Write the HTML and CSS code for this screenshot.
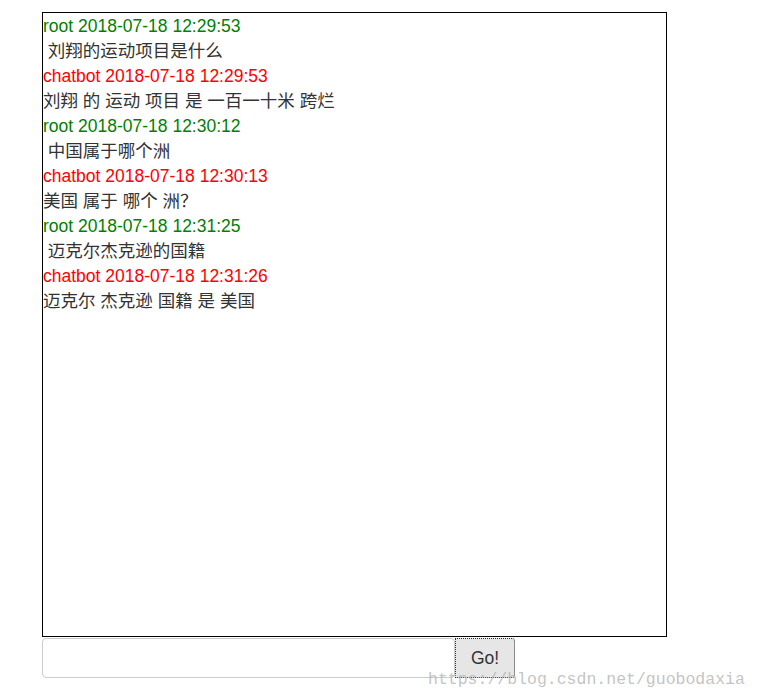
FILE: index.html
```html
<!DOCTYPE html>
<html>
<head>
<meta charset="utf-8">
<link rel="stylesheet" href="styles.css">
</head>
<body>
<div class="page">
  <div class="chat">
    <div class="meta user">root 2018-07-18 12:29:53</div>
    <div class="msg">&nbsp;刘翔的运动项目是什么</div>
    <div class="meta bot">chatbot 2018-07-18 12:29:53</div>
    <div class="msg">刘翔 的 运动 项目 是 一百一十米 跨烂</div>
    <div class="meta user">root 2018-07-18 12:30:12</div>
    <div class="msg">&nbsp;中国属于哪个洲</div>
    <div class="meta bot">chatbot 2018-07-18 12:30:13</div>
    <div class="msg">美国 属于 哪个 洲？</div>
    <div class="meta user">root 2018-07-18 12:31:25</div>
    <div class="msg">&nbsp;迈克尔杰克逊的国籍</div>
    <div class="meta bot">chatbot 2018-07-18 12:31:26</div>
    <div class="msg">迈克尔 杰克逊 国籍 是 美国</div>
  </div>
  <div class="form">
    <input class="input" type="text">
    <button class="go">Go!</button>
  </div>
</div>
<div class="watermark">https://blog.csdn.net/guobodaxia</div>
</body>
</html>
```
FILE: styles.css
```css
html, body {
  margin: 0;
  padding: 0;
  background: #fff;
}
body {
  font-family: "Liberation Sans", Arial, "Noto Sans CJK SC", sans-serif;
  font-size: 17.5px;
}
.page {
  padding: 12px 0 0 42px;
}
.chat {
  box-sizing: border-box;
  width: 625px;
  height: 625px;
  border: 1px solid #000;
  padding-top: 1px;
  overflow: hidden;
}
.meta, .msg {
  height: 25px;
  line-height: 25px;
  white-space: pre;
}
.user { color: #008000; }
.bot { color: #ff0000; }
.msg { color: #333; }
.form {
  display: flex;
  margin-top: 1px;
}
.input {
  box-sizing: border-box;
  width: 413px;
  height: 40px;
  border: 1px solid #ccc;
  border-radius: 4px;
  margin: 0;
  padding: 0 6px;
  background: #fff;
}
.go {
  box-sizing: border-box;
  width: 60px;
  height: 40px;
  margin: 0;
  border: 1px dotted #333;
  background: #e6e6e6;
  color: #333;
  font-family: "Liberation Sans", Arial, sans-serif;
  font-size: 17.5px;
  border-radius: 0 3px 3px 0;
}
.watermark {
  position: absolute;
  left: 428px;
  top: 670px;
  font-family: "Liberation Mono", monospace;
  font-size: 16.5px;
  color: rgba(180, 180, 180, 0.8);
}
```
